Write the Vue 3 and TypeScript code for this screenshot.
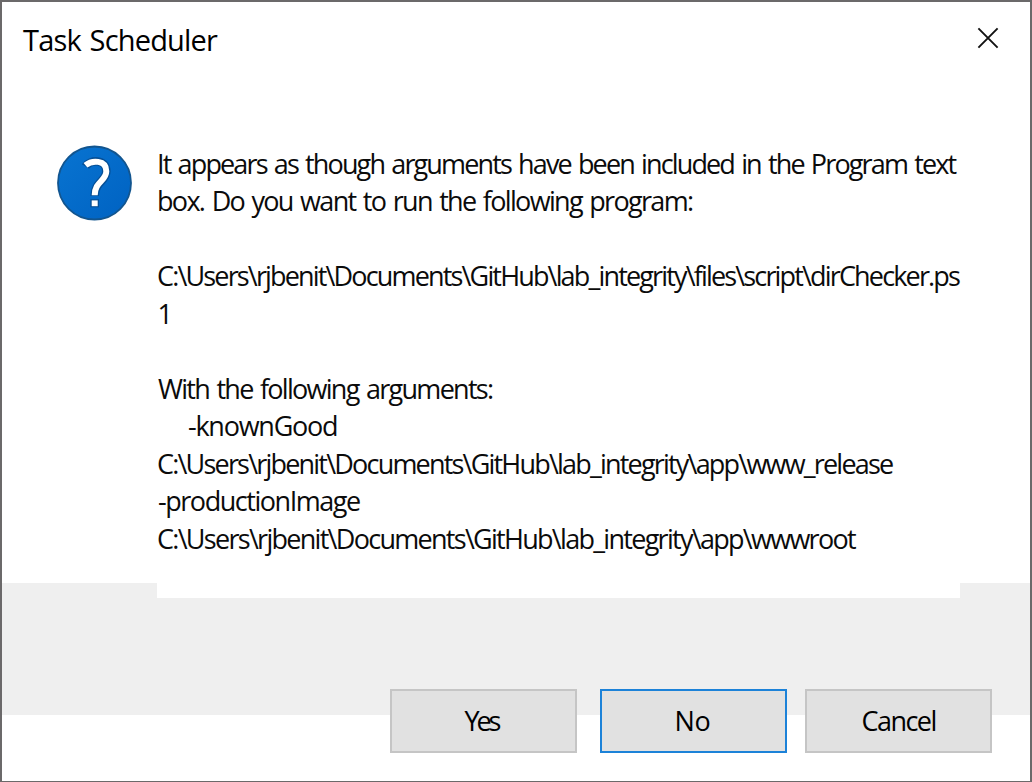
<script setup lang="ts">
interface FittedText {
  text: string
  left: number
  width: number
}

const FAMILY = '"Open Sans", "Noto Sans", sans-serif'
const WORD_GAP = 2
const context = document.createElement('canvas').getContext('2d')

// Spaces the letters so that the inked part of a line starts at `left` and spans `width`.
function fit(line: FittedText, size: number) {
  if (!context || line.text.length < 2) return { marginLeft: `${line.left}px` }
  context.font = `400 ${size}px ${FAMILY}`
  const m = context.measureText(line.text)
  const gaps = (line.text.split(' ').length - 1) * WORD_GAP
  const ink = m.actualBoundingBoxLeft + m.actualBoundingBoxRight + gaps
  const spacing = (line.width - ink) / (line.text.length - 1)
  return {
    wordSpacing: `${WORD_GAP}px`,
    letterSpacing: `${spacing.toFixed(4)}px`,
    marginLeft: `${(line.left + m.actualBoundingBoxLeft).toFixed(2)}px`,
  }
}

const title: FittedText = { text: 'Task Scheduler', left: 21, width: 195 }

const message: FittedText[] = [
  { text: 'It appears as though arguments have been included in the Program text', left: 2, width: 797.5 },
  { text: 'box. Do you want to run the following program:', left: 2, width: 534 },
  { text: '', left: 0, width: 0 },
  { text: 'C:\\Users\\rjbenit\\Documents\\GitHub\\lab_integrity\\files\\script\\dirChecker.ps', left: 1, width: 802 },
  { text: '1', left: 0.5, width: 0 },
  { text: '', left: 0, width: 0 },
  { text: 'With the following arguments:', left: 1, width: 335 },
  { text: '-knownGood', left: 32, width: 148 },
  { text: 'C:\\Users\\rjbenit\\Documents\\GitHub\\lab_integrity\\app\\www_release', left: 1, width: 735 },
  { text: '-productionImage', left: 2, width: 201 },
  { text: 'C:\\Users\\rjbenit\\Documents\\GitHub\\lab_integrity\\app\\wwwroot', left: 1, width: 698 },
]

const buttons = [
  { text: 'Yes', left: 73, width: 36, focused: false },
  { text: 'No', left: 75, width: 33, focused: true },
  { text: 'Cancel', left: 55.5, width: 73, focused: false },
]
</script>

<template>
  <div class="dialog" role="dialog">
    <header class="titlebar">
      <h1 class="title" :style="fit(title, 29)">{{ title.text }}</h1>
      <button class="close" aria-label="Close">
        <svg width="22" height="22" viewBox="0 0 22 22">
          <path d="M1.4 1.4 20.6 20.6M20.6 1.4 1.4 20.6" fill="none" stroke="#111" stroke-width="1.9" />
        </svg>
      </button>
    </header>
    <main class="content">
      <svg class="icon" width="76" height="76" viewBox="0 0 76 76">
        <defs>
          <linearGradient id="disc" x1="0" y1="0" x2="1" y2="1">
            <stop offset="0" stop-color="#0874d1" />
            <stop offset="1" stop-color="#0062c2" />
          </linearGradient>
        </defs>
        <circle cx="37.5" cy="38" r="36.5" fill="url(#disc)" stroke="#12558f" stroke-width="1.8" />
        <g fill="none" stroke="#064f96" stroke-width="8.6">
          <path d="M28.5 21.5C33 14.5 49.3 13.5 49.3 26.2C49.3 36.5 37.7 36.5 37.7 51" />
          <path d="M37.7 54.2V62.3" />
        </g>
        <g fill="none" stroke="#fff" stroke-width="6">
          <path d="M28.5 20.2C34.5 15.2 49.3 14.3 49.3 26.2C49.3 36 37.7 36.5 37.7 50.3" />
          <path d="M37.7 55.4V61.2" />
        </g>
      </svg>
      <div class="message">
        <p v-for="(line, i) in message" :key="i" class="line" :style="fit(line, 27)">{{ line.text }}</p>
      </div>
    </main>
    <footer class="footer">
      <button v-for="b in buttons" :key="b.text" class="button" :class="{ focused: b.focused }">
        <span class="label" :style="fit(b, 27)">{{ b.text }}</span>
      </button>
    </footer>
  </div>
</template>

<style>
body {
  margin: 0;
  overflow: hidden;
}
</style>

<style scoped>
.dialog {
  box-sizing: border-box;
  width: 1032px;
  height: 782px;
  display: flex;
  flex-direction: column;
  border: 2px solid #6b696a;
  border-bottom-width: 1px;
  background: linear-gradient(#fff 581px, #efefef 581px, #efefef 713px, #fff 713px);
  font-family: "Open Sans", "Noto Sans", sans-serif;
  color: #000;
}
.titlebar {
  height: 143px;
  display: flex;
  justify-content: space-between;
  align-items: flex-start;
}
.title {
  margin-top: 18px;
  margin-bottom: 0;
  font-size: 29px;
  font-weight: 400;
  line-height: 40px;
  white-space: pre;
}
.close {
  margin: 25px 31px 0 0;
  padding: 0;
  border: 0;
  background: none;
  width: 22px;
  height: 22px;
}
.close svg,
.icon {
  display: block;
}
.content {
  display: flex;
  gap: 24px;
  padding-left: 55px;
  height: 454px;
}
.icon {
  flex: none;
}
.message {
  box-sizing: border-box;
  width: 803px;
  height: 453.4px;
  background: #fff;
}
.line {
  margin: 0;
  height: 37.46px;
  font-size: 27px;
  line-height: 37px;
  white-space: pre;
  color: #0b0b0b;
}
.footer {
  display: flex;
  justify-content: flex-end;
  padding: 90px 38px 0 0;
}
.button {
  box-sizing: border-box;
  width: 187px;
  height: 64px;
  padding: 0;
  border: 2px solid #c5c5c5;
  background: #e1e1e1;
  font: 27px/58px "Open Sans", "Noto Sans", sans-serif;
  color: #000;
  text-align: left;
  white-space: pre;
}
.button:nth-child(2) {
  margin: 0 18.5px 0 23px;
}
.button.focused {
  border-color: #1c82d8;
}
.label {
  display: inline-block;
}
</style>
